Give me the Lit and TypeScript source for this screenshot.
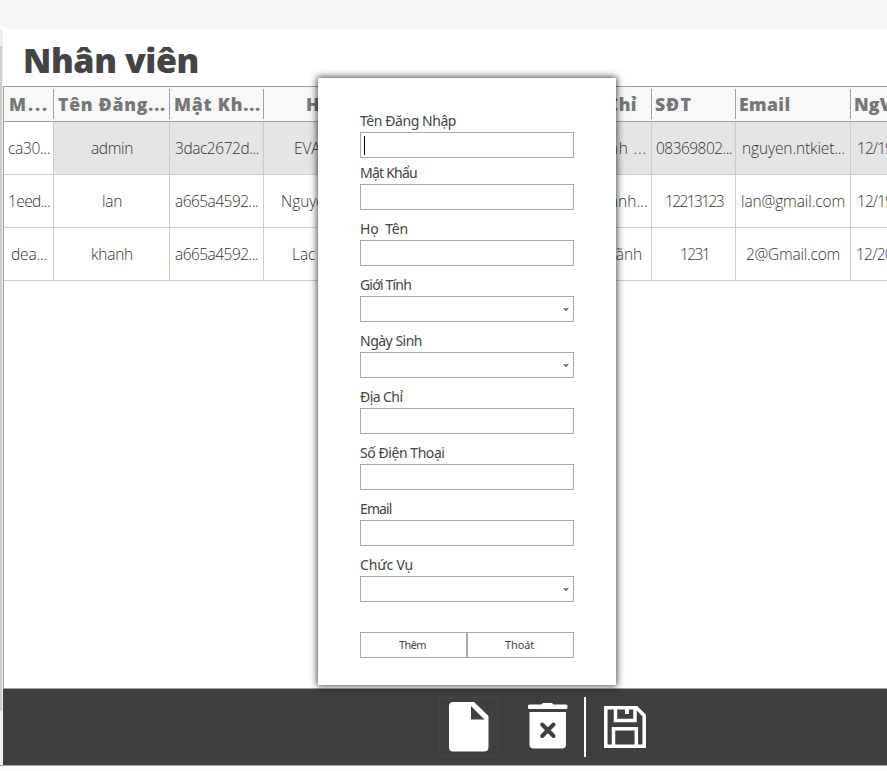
import { LitElement, html, css, nothing } from "lit";
import { customElement, property } from "lit/decorators.js";

/** Text whose letter spacing is adjusted so that it takes a given width. */
@customElement("fit-text")
class FitText extends LitElement {
  @property() text = "";
  @property({ type: Number }) width = 0;

  static styles = css`
    :host { display: inline-block; white-space: pre; }
    .run { display: inline-block; white-space: pre; font-variant-ligatures: none; }
  `;

  updated() {
    const run = this.renderRoot.querySelector(".run") as HTMLElement;
    run.style.letterSpacing = "0px";
    const natural = run.getBoundingClientRect().width;
    const gap = (this.width - natural) / Math.max(1, this.text.length);
    run.style.letterSpacing = `${gap.toFixed(3)}px`;
  }

  render() {
    return html`<span class="run">${this.text}</span>`;
  }
}

type Cell = [text: string, width: number, offset: number];

interface Field { label: string; width: number; drop?: boolean; first?: boolean; }

const HEADERS: Cell[] = [
  ["M...", 40, 5], ["Tên Đăng...", 108, 4], ["Mật Kh...", 87, 4],
  ["Họ Tên", 62, 42], ["Địa Chỉ", 66, 107], ["SĐT", 37, 3], ["Email", 51.5, 3], ["NgV", 38, 3],
];

const ROWS: Cell[][] = [
  [["ca30...", 42, 4], ["admin", 42, 37], ["3dac2672d...", 84, 5], ["EVANS", 46, 30],
   ["Thành ...", 66, 117], ["08369802...", 76, 4], ["nguyen.ntkiet...", 103, 6], ["12/19", 36, 6]],
  [["1eed...", 42, 4], ["lan", 20, 48], ["a665a4592...", 83, 5], ["Nguyễn Lan", 82, 17],
   ["Ng Lãnh...", 70, 114], ["12213123", 58, 13], ["lan@gmail.com", 104, 5], ["12/19", 36, 6]],
  [["dea...", 36, 7], ["khanh", 42, 37], ["a665a4592...", 83, 5], ["Lạc Khanh", 72, 28],
   ["Ng Lãnh", 57, 121], ["1231", 29, 28], ["2@Gmail.com", 94, 10], ["12/20", 37, 5]],
];

const FIELDS: Field[] = [
  { label: "Tên Đăng Nhập", width: 96, first: true },
  { label: "Mật Khẩu", width: 57 },
  { label: "Họ  Tên", width: 48 },
  { label: "Giới Tính", width: 51, drop: true },
  { label: "Ngày Sinh", width: 62, drop: true },
  { label: "Địa Chỉ", width: 42.5 },
  { label: "Số Điện Thoại", width: 84.5 },
  { label: "Email", width: 31.5 },
  { label: "Chức Vụ", width: 53, drop: true },
];

@customElement("app-root")
class AppRoot extends LitElement {
  static styles = css`
    :host {
      display: block; position: relative; width: 887px; height: 771px; overflow: hidden;
      background: #fbfbfb; font-family: "Open Sans", "Noto Sans", sans-serif; color: #444;
    }
    * { box-sizing: border-box; }
    .band { height: 29px; background: #f7f7f7; }
    .body { display: flex; height: 737px; border-bottom: 1px solid #a0a0a0; }
    .gutter { width: 3px; height: 736px; background: #f0f0f0; padding-top: 17px; }
    .thumb { width: 2px; height: 665px; background: #cdcdcd; }
    .main { flex: 1; min-width: 0; display: flex; flex-direction: column; background: #fff; }
    .title { height: 57px; padding: 7px 0 0 20px; font-weight: 800; font-size: 34px; line-height: 48px; color: #444; }
    .table { height: 602px; border-top: 1px solid #a0a0a0; border-left: 1px solid #a0a0a0; overflow: hidden; }
    .grid { display: grid; width: 920px; grid-template-columns: 50px 116px 94px 200px 188px 84px 115px 73px; }
    .head { height: 35px; background: #f8f8f8; border-bottom: 1px solid #a0a0a0; padding: 2px 0; }
    .th { border-right: 1px solid #a0a0a0; font-weight: 800; font-size: 17.6px; line-height: 31px; color: #777; overflow: hidden; white-space: nowrap; }
    .td { height: 53px; border-right: 1px solid #cdcdcd; border-bottom: 1px solid #cdcdcd; font-weight: 300; font-size: 15.5px; line-height: 53px; color: #333; overflow: hidden; white-space: nowrap; }
    .selected .td:not(:first-child) { background: #e5e5e5; }
    .bar { height: 77px; background: #3f3f3f; border-top: 1px solid #a0a0a0; display: flex; align-items: flex-start; padding: 8px 0 0 436px; }
    .tool { width: 59px; height: 60px; display: block; }
    .new { border: 1px solid #464646; }
    .trash { margin-left: 20px; }
    .rule { width: 2px; height: 60px; background: #fff; margin-left: 7px; }
    .save { margin-left: 10px; }
    .dialog {
      position: absolute; left: 318px; top: 78px; width: 298px; height: 607px; background: #fff;
      padding: 33px 42px 0; box-shadow: 0 0 7px 1px rgba(0, 0, 0, 0.72);
      font-family: "Noto Sans", sans-serif;
    }
    .field { height: 56px; padding-top: 1px; }
    .first { height: 52px; padding-top: 0; }
    .second { padding-top: 0; height: 52px; margin-bottom: 3px; }
    .label { height: 20px; line-height: 20px; font-size: 14px; color: #444; margin-bottom: 1px; }
    .box { height: 26px; border: 1px solid #a9a9a9; display: flex; align-items: center; justify-content: space-between; padding: 0 4px 0 3px; }
    .caret { width: 1px; height: 19px; background: #000; }
    .arrow { width: 6px; height: 3px; margin-left: auto; }
    .buttons { display: flex; margin-top: 22px; }
    .button { width: 107px; height: 26px; border: 1px solid #a9a9a9; font-size: 11px; line-height: 24px; color: #444; text-align: center; padding-right: 2px; }
  `;

  private cell([text, width, offset]: Cell, kind: string) {
    return html`<div class=${kind}><fit-text style="margin-left:${offset}px" .text=${text} .width=${width}></fit-text></div>`;
  }

  private field(f: Field, i: number) {
    return html`<div class="field ${i === 0 ? "first" : i === 1 ? "second" : ""}">
      <div class="label"><fit-text .text=${f.label} .width=${f.width}></fit-text></div>
      <div class="box">
        ${f.first ? html`<div class="caret"></div>` : nothing}
        ${f.drop ? html`<svg class="arrow" viewBox="0 0 6 3"><path d="M0 0H6L3.500 3H2.500Z" fill="#777" /></svg>` : nothing}
      </div>
    </div>`;
  }

  render() {
    return html`
      <div class="band"></div>
      <div class="body">
        <div class="gutter"><div class="thumb"></div></div>
        <div class="main">
          <div class="title"><fit-text .text=${"Nhân viên"} .width=${176}></fit-text></div>
          <div class="table">
            <div class="grid head">${HEADERS.map((c) => this.cell(c, "th"))}</div>
            ${ROWS.map((r, i) => html`<div class="grid ${i === 0 ? "selected" : ""}">${r.map((c) => this.cell(c, "td"))}</div>`)}
          </div>
          <div class="bar">
            <svg class="tool new" viewBox="0 0 57 58">
              <path fill="#fff" fill-rule="evenodd" d="M13 4H34L48.500 18V49Q48.500 53.500 44 53.500H13Q9 53.500 9 49V8.500Q9 4 13 4ZM31 8V21.500H44.500Z" />
            </svg>
            <svg class="tool trash" viewBox="0 0 59 60">
              <rect x="10" y="7.500" width="39.500" height="4.500" rx="1.500" fill="#fff" />
              <path d="M23 8L25 6H34L36 8Z" fill="#fff" />
              <path d="M11.500 15H48V47.500Q48 51.500 44 51.500H15.500Q11.500 51.500 11.500 47.500Z" fill="#fff" />
              <path d="M24.200 27.500L35.500 39M35.500 27.500L24.200 39" stroke="#3f3f3f" stroke-width="4" stroke-linecap="round" />
            </svg>
            <div class="rule"></div>
            <svg class="tool save" viewBox="0 0 59 60">
              <path fill="none" stroke="#fff" stroke-width="3.500" d="M9.800 10.800H40.500L48.200 18.500V49.200H9.800ZM19.500 10V23.500H39V10M17.500 49V31.800H40.300V49" />
              <path fill="#fff" d="M29 11H33V17H29Z" />
            </svg>
          </div>
        </div>
      </div>
      <div class="dialog">
        ${FIELDS.map((f, i) => this.field(f, i))}
        <div class="buttons">
          <div class="button"><fit-text .text=${"Thêm"} .width=${27}></fit-text></div>
          <div class="button"><fit-text .text=${"Thoát"} .width=${29}></fit-text></div>
        </div>
      </div>
    `;
  }
}
